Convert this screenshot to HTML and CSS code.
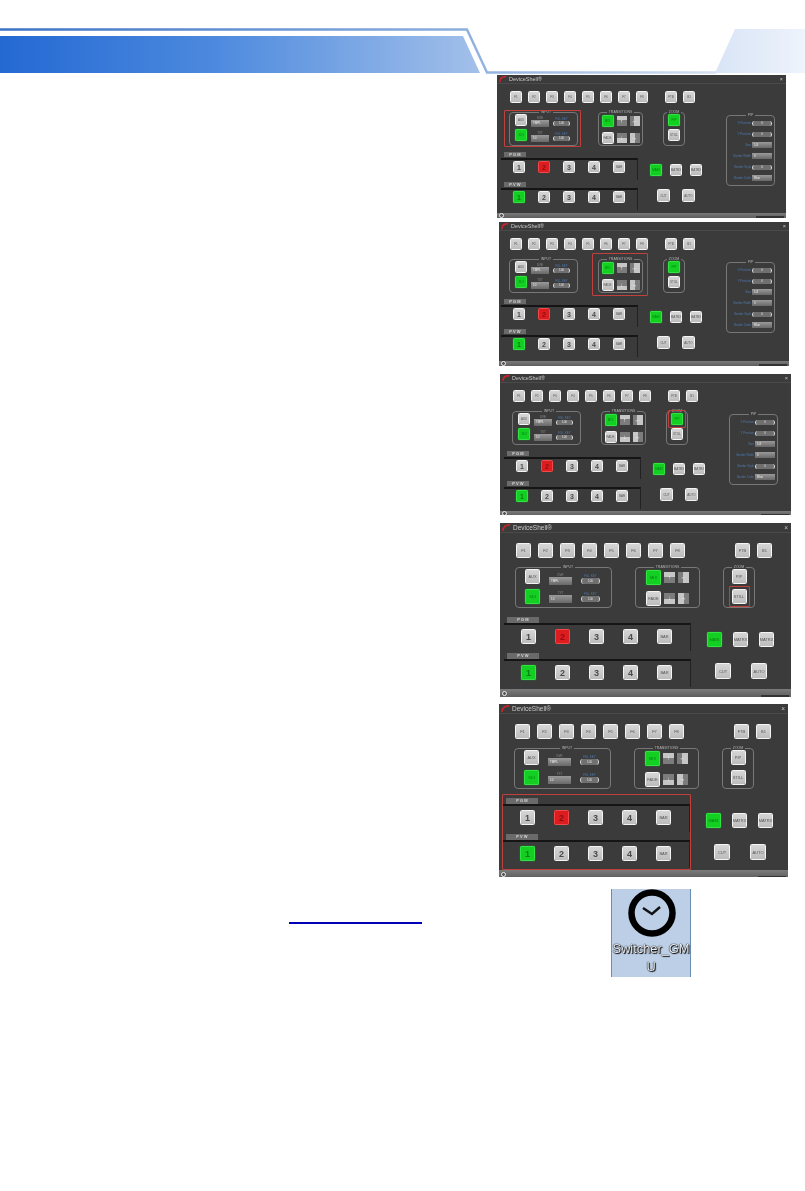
FILE: index.html
```html
<!DOCTYPE html>
<html>
  <head>
    <title>Switcher GMU</title>
    <meta charset="utf-8" />
    <link rel="stylesheet" href="styles.css">
  </head>
  <body>
    <svg class="banner" width="805" height="75" viewBox="0 0 805 75">
      <defs>
        <linearGradient id="band"><stop offset="0" stop-color="#2469d3"/><stop offset=".45" stop-color="#4d8ade"/><stop offset="1" stop-color="#a3c0ea"/></linearGradient>
        <linearGradient id="rule" gradientUnits="userSpaceOnUse" x1="0" x2="715" y1="0" y2="0"><stop offset="0" stop-color="#3a72c4"/><stop offset=".65" stop-color="#8dafdf"/><stop offset="1" stop-color="#d5e0f0"/></linearGradient>
        <linearGradient id="tab"><stop offset="0" stop-color="#d8e4f6"/><stop offset="1" stop-color="#eef3fc"/></linearGradient>
      </defs>
      <path d="M0 29.5H467L487 72.5H716" fill="none" stroke="url(#rule)" stroke-width="2.4"/>
      <path d="M0 36H463L480 73H0Z" fill="url(#band)"/>
      <path d="M735 29H805V73H715Z" fill="url(#tab)"/>
    </svg>

    <div class="shots">
      <!-- shot 1: input group marked -->
      <section class="panel shot-1">
        <header class="title"><svg class="logo" viewBox="0 0 10 8"><path d="M1 8C1 3 5 1 9 1" fill="none" stroke="#c8242a" stroke-width="2"/></svg><span>DeviceShell®</span><span class="close">×</span></header>
        <div class="work">
          <div class="main">
            <div class="fkeys"><b class="key">F1</b><b class="key">F2</b><b class="key">F3</b><b class="key">F4</b><b class="key">F5</b><b class="key">F6</b><b class="key">F7</b><b class="key">F8</b><b class="key f-right">FTB</b><b class="key">B1</b></div>
            <div class="groups">
              <fieldset class="group input-group marked"><legend>INPUT</legend>
                <div class="stack"><b class="key">AUX</b><b class="key on">SDI</b></div>
                <div class="stack combos"><label>DVE<i class="combo">TMPL</i></label><label>TXT<i class="combo">10</i></label></div>
                <div class="stack pills"><label class="blue">FILL KEY<i class="pill">100</i></label><label class="blue">FILL KEY<i class="pill">100</i></label></div>
              </fieldset>
              <fieldset class="group trans-group"><legend>TRANSITIONS</legend>
                <b class="key on">MIX</b><i class="wipe wipe-up">↑</i><i class="wipe wipe-left">←</i><b class="key">FADE</b><i class="wipe wipe-down">↓</i><i class="wipe wipe-right">→</i>
              </fieldset>
              <fieldset class="group zoom-group"><legend>ZOOM</legend>
                <div class="stack"><b class="key on">PIP</b><b class="key">STILL</b></div>
              </fieldset>
            </div>
            <div class="lower">
              <div class="rows">
                <div class="row-label">P G M</div>
                <div class="row"><b class="key num">1</b><b class="key num alert">2</b><b class="key num">3</b><b class="key num">4</b><b class="key">BAR</b></div>
                <div class="row-label">P V W</div>
                <div class="row"><b class="key num on">1</b><b class="key num">2</b><b class="key num">3</b><b class="key num">4</b><b class="key">BAR</b></div>
              </div>
              <div class="outs">
                <div class="outs-top"><b class="key on">MAIN</b><b class="key">MATRX</b><b class="key">MATRX</b></div>
                <div class="outs-bottom"><b class="key">CUT</b><b class="key">AUTO</b></div>
              </div>
            </div>
          </div>
          <fieldset class="group pip"><legend>PIP</legend>
            <label class="blue">X Position<i class="pill">0</i></label><label class="blue">Y Position<i class="pill">0</i></label><label class="blue">Size<i class="combo">1/4</i></label><label class="blue">Border Width<i class="combo">0</i></label><label class="blue">Border Style<i class="pill">0</i></label><label class="blue">Border Color<i class="combo">Blue</i></label>
          </fieldset>
        </div>
        <footer class="status"><i class="dot"></i><i class="grip"></i></footer>
      </section>

      <!-- shot 2: transitions marked -->
      <section class="panel shot-2">
        <header class="title"><svg class="logo" viewBox="0 0 10 8"><path d="M1 8C1 3 5 1 9 1" fill="none" stroke="#c8242a" stroke-width="2"/></svg><span>DeviceShell®</span><span class="close">×</span></header>
        <div class="work">
          <div class="main">
            <div class="fkeys"><b class="key">F1</b><b class="key">F2</b><b class="key">F3</b><b class="key">F4</b><b class="key">F5</b><b class="key">F6</b><b class="key">F7</b><b class="key">F8</b><b class="key f-right">FTB</b><b class="key">B1</b></div>
            <div class="groups">
              <fieldset class="group input-group"><legend>INPUT</legend>
                <div class="stack"><b class="key">AUX</b><b class="key on">SDI</b></div>
                <div class="stack combos"><label>DVE<i class="combo">TMPL</i></label><label>TXT<i class="combo">10</i></label></div>
                <div class="stack pills"><label class="blue">FILL KEY<i class="pill">100</i></label><label class="blue">FILL KEY<i class="pill">100</i></label></div>
              </fieldset>
              <div class="trans-frame marked">
                <fieldset class="group trans-group"><legend>TRANSITIONS</legend>
                  <b class="key on">MIX</b><i class="wipe wipe-up">↑</i><i class="wipe wipe-left">←</i><b class="key">FADE</b><i class="wipe wipe-down">↓</i><i class="wipe wipe-right">→</i>
                </fieldset>
              </div>
              <fieldset class="group zoom-group"><legend>ZOOM</legend>
                <div class="stack"><b class="key on">PIP</b><b class="key">STILL</b></div>
              </fieldset>
            </div>
            <div class="lower">
              <div class="rows">
                <div class="row-label">P G M</div>
                <div class="row"><b class="key num">1</b><b class="key num alert">2</b><b class="key num">3</b><b class="key num">4</b><b class="key">BAR</b></div>
                <div class="row-label">P V W</div>
                <div class="row"><b class="key num on">1</b><b class="key num">2</b><b class="key num">3</b><b class="key num">4</b><b class="key">BAR</b></div>
              </div>
              <div class="outs">
                <div class="outs-top"><b class="key on">MAIN</b><b class="key">MATRX</b><b class="key">MATRX</b></div>
                <div class="outs-bottom"><b class="key">CUT</b><b class="key">AUTO</b></div>
              </div>
            </div>
          </div>
          <fieldset class="group pip"><legend>PIP</legend>
            <label class="blue">X Position<i class="pill">0</i></label><label class="blue">Y Position<i class="pill">0</i></label><label class="blue">Size<i class="combo">1/4</i></label><label class="blue">Border Width<i class="combo">0</i></label><label class="blue">Border Style<i class="pill">0</i></label><label class="blue">Border Color<i class="combo">Blue</i></label>
          </fieldset>
        </div>
        <footer class="status"><i class="dot"></i><i class="grip"></i></footer>
      </section>

      <!-- shot 3: pip key marked -->
      <section class="panel shot-3">
        <header class="title"><svg class="logo" viewBox="0 0 10 8"><path d="M1 8C1 3 5 1 9 1" fill="none" stroke="#c8242a" stroke-width="2"/></svg><span>DeviceShell®</span><span class="close">×</span></header>
        <div class="work">
          <div class="main">
            <div class="fkeys"><b class="key">F1</b><b class="key">F2</b><b class="key">F3</b><b class="key">F4</b><b class="key">F5</b><b class="key">F6</b><b class="key">F7</b><b class="key">F8</b><b class="key f-right">FTB</b><b class="key">B1</b></div>
            <div class="groups">
              <fieldset class="group input-group"><legend>INPUT</legend>
                <div class="stack"><b class="key">AUX</b><b class="key on">SDI</b></div>
                <div class="stack combos"><label>DVE<i class="combo">TMPL</i></label><label>TXT<i class="combo">10</i></label></div>
                <div class="stack pills"><label class="blue">FILL KEY<i class="pill">100</i></label><label class="blue">FILL KEY<i class="pill">100</i></label></div>
              </fieldset>
              <fieldset class="group trans-group"><legend>TRANSITIONS</legend>
                <b class="key on">MIX</b><i class="wipe wipe-up">↑</i><i class="wipe wipe-left">←</i><b class="key">FADE</b><i class="wipe wipe-down">↓</i><i class="wipe wipe-right">→</i>
              </fieldset>
              <fieldset class="group zoom-group"><legend>ZOOM</legend>
                <div class="stack"><b class="key on marked">PIP</b><b class="key">STILL</b></div>
              </fieldset>
            </div>
            <div class="lower">
              <div class="rows">
                <div class="row-label">P G M</div>
                <div class="row"><b class="key num">1</b><b class="key num alert">2</b><b class="key num">3</b><b class="key num">4</b><b class="key">BAR</b></div>
                <div class="row-label">P V W</div>
                <div class="row"><b class="key num on">1</b><b class="key num">2</b><b class="key num">3</b><b class="key num">4</b><b class="key">BAR</b></div>
              </div>
              <div class="outs">
                <div class="outs-top"><b class="key on">MAIN</b><b class="key">MATRX</b><b class="key">MATRX</b></div>
                <div class="outs-bottom"><b class="key">CUT</b><b class="key">AUTO</b></div>
              </div>
            </div>
          </div>
          <fieldset class="group pip"><legend>PIP</legend>
            <label class="blue">X Position<i class="pill">0</i></label><label class="blue">Y Position<i class="pill">0</i></label><label class="blue">Size<i class="combo">1/4</i></label><label class="blue">Border Width<i class="combo">0</i></label><label class="blue">Border Style<i class="pill">0</i></label><label class="blue">Border Color<i class="combo">Blue</i></label>
          </fieldset>
        </div>
        <footer class="status"><i class="dot"></i><i class="grip"></i></footer>
      </section>

      <!-- shot 4: still key marked, larger window without pip -->
      <section class="panel wide shot-4">
        <header class="title"><svg class="logo" viewBox="0 0 10 8"><path d="M1 8C1 3 5 1 9 1" fill="none" stroke="#c8242a" stroke-width="2"/></svg><span>DeviceShell®</span><span class="close">×</span></header>
        <div class="work">
          <div class="main">
            <div class="fkeys"><b class="key">F1</b><b class="key">F2</b><b class="key">F3</b><b class="key">F4</b><b class="key">F5</b><b class="key">F6</b><b class="key">F7</b><b class="key">F8</b><b class="key f-right">FTB</b><b class="key">B1</b></div>
            <div class="groups">
              <fieldset class="group input-group"><legend>INPUT</legend>
                <div class="stack"><b class="key">AUX</b><b class="key on">SDI</b></div>
                <div class="stack combos"><label>DVE<i class="combo">TMPL</i></label><label>TXT<i class="combo">10</i></label></div>
                <div class="stack pills"><label class="blue">FILL KEY<i class="pill">100</i></label><label class="blue">FILL KEY<i class="pill">100</i></label></div>
              </fieldset>
              <fieldset class="group trans-group"><legend>TRANSITIONS</legend>
                <b class="key on">MIX</b><i class="wipe wipe-up">↑</i><i class="wipe wipe-left">←</i><b class="key">FADE</b><i class="wipe wipe-down">↓</i><i class="wipe wipe-right">→</i>
              </fieldset>
              <fieldset class="group zoom-group"><legend>ZOOM</legend>
                <div class="stack"><b class="key">PIP</b><b class="key marked">STILL</b></div>
              </fieldset>
            </div>
            <div class="lower">
              <div class="rows">
                <div class="row-label">P G M</div>
                <div class="row"><b class="key num">1</b><b class="key num alert">2</b><b class="key num">3</b><b class="key num">4</b><b class="key">BAR</b></div>
                <div class="row-label">P V W</div>
                <div class="row"><b class="key num on">1</b><b class="key num">2</b><b class="key num">3</b><b class="key num">4</b><b class="key">BAR</b></div>
              </div>
              <div class="outs">
                <div class="outs-top"><b class="key on">MAIN</b><b class="key">MATRX</b><b class="key">MATRX</b></div>
                <div class="outs-bottom"><b class="key">CUT</b><b class="key">AUTO</b></div>
              </div>
            </div>
          </div>
        </div>
        <footer class="status"><i class="dot"></i><i class="grip"></i></footer>
      </section>

      <!-- shot 5: pgm and pvw rows marked -->
      <section class="panel wide shot-5">
        <header class="title"><svg class="logo" viewBox="0 0 10 8"><path d="M1 8C1 3 5 1 9 1" fill="none" stroke="#c8242a" stroke-width="2"/></svg><span>DeviceShell®</span><span class="close">×</span></header>
        <div class="work">
          <div class="main">
            <div class="fkeys"><b class="key">F1</b><b class="key">F2</b><b class="key">F3</b><b class="key">F4</b><b class="key">F5</b><b class="key">F6</b><b class="key">F7</b><b class="key">F8</b><b class="key f-right">FTB</b><b class="key">B1</b></div>
            <div class="groups">
              <fieldset class="group input-group"><legend>INPUT</legend>
                <div class="stack"><b class="key">AUX</b><b class="key on">SDI</b></div>
                <div class="stack combos"><label>DVE<i class="combo">TMPL</i></label><label>TXT<i class="combo">10</i></label></div>
                <div class="stack pills"><label class="blue">FILL KEY<i class="pill">100</i></label><label class="blue">FILL KEY<i class="pill">100</i></label></div>
              </fieldset>
              <fieldset class="group trans-group"><legend>TRANSITIONS</legend>
                <b class="key on">MIX</b><i class="wipe wipe-up">↑</i><i class="wipe wipe-left">←</i><b class="key">FADE</b><i class="wipe wipe-down">↓</i><i class="wipe wipe-right">→</i>
              </fieldset>
              <fieldset class="group zoom-group"><legend>ZOOM</legend>
                <div class="stack"><b class="key">PIP</b><b class="key">STILL</b></div>
              </fieldset>
            </div>
            <div class="lower">
              <div class="rows marked">
                <div class="row-label">P G M</div>
                <div class="row"><b class="key num">1</b><b class="key num alert">2</b><b class="key num">3</b><b class="key num">4</b><b class="key">BAR</b></div>
                <div class="row-label">P V W</div>
                <div class="row"><b class="key num on">1</b><b class="key num">2</b><b class="key num">3</b><b class="key num">4</b><b class="key">BAR</b></div>
              </div>
              <div class="outs">
                <div class="outs-top"><b class="key on">MAIN</b><b class="key">MATRX</b><b class="key">MATRX</b></div>
                <div class="outs-bottom"><b class="key">CUT</b><b class="key">AUTO</b></div>
              </div>
            </div>
          </div>
        </div>
        <footer class="status"><i class="dot"></i><i class="grip"></i></footer>
      </section>
    </div>

    <div class="bottom">
      <div class="link-rule"></div>
      <div class="desktop-icon">
        <svg width="80" height="50" viewBox="0 0 80 50"><circle cx="41" cy="24" r="20.5" fill="none" stroke="#000" stroke-width="6.5"/><path d="M32 19L41 25L49 18" fill="none" stroke="#111" stroke-width="2.4"/></svg>
        <div class="desktop-name">Switcher_GMU</div>
      </div>
    </div>
  </body>
</html>
```

FILE: styles.css
```css
body {
  margin: 0;
  background: #fff;
  font-family: "Liberation Sans", Arial, sans-serif;
  min-height: 1191px;
}

.banner {
  display: block;
}

.shots {
  display: flex;
  flex-direction: column;
  align-items: flex-start;
}

.shot-1 { margin-left: 497px; width: 289px; height: 143px; }
.shot-2 { margin: 4px 0 0 499px; width: 290px; height: 144px; }
.shot-3 { margin: 8px 0 0 500px; width: 291px; height: 141px; }
.shot-4 { margin: 8px 0 0 500px; width: 291px; height: 174px; }
.shot-5 { margin: 7px 0 0 499px; width: 289px; height: 173px; }

.shot-2 .main { margin-left: -2px; }

/* sizes differ between the small and the large window */
.panel {
  --title: 8px;
  --title-font: 5.5px;
  --status: 5px;
  --btn: 12px;
  --btn-font: 3px;
  --num-font: 7px;
  --key-gap: 6px;
  --key-left: 13px;
  --key-top: 7px;
  --f-right: 11px;
  --groups-top: 7px;
  --groups-left: 12px;
  --group-h: 36px;
  --input-w: 69px;
  --trans-w: 45px;
  --zoom-w: 22px;
  --group-gap: 20px;
  --stack-gap: 3px;
  --stack-left: 5px;
  --combo-w: 18px;
  --combo-h: 7px;
  --pill-w: 17px;
  --pill-h: 5px;
  --col-gap: 4px;
  --wipe: 10px;
  --lower-top: 6px;
  --rows-w: 137px;
  --label-w: 22px;
  --label-h: 5px;
  --label-gap: 1px;
  --row-h: 22px;
  --row-pad: 1px;
  --row-left: 12px;
  --row-gap: 13px;
  --outs-left: 12px;
  --outs-top: 12px;
  --outs-gap: 8px;
  --outs-row: 13px;
  --cut: 13px;
  --cut-left: 7px;
  --cut-gap: 12px;
  display: flex;
  flex-direction: column;
  background: #3b3b3b;
  color: #cfcfcf;
  filter: blur(.4px);
  overflow: hidden;
}

.wide {
  --title: 9px;
  --title-font: 6.5px;
  --status: 8px;
  --btn: 15px;
  --btn-font: 4px;
  --num-font: 9px;
  --key-gap: 7px;
  --key-left: 16px;
  --key-top: 10px;
  --f-right: 43px;
  --groups-left: 15px;
  --group-h: 43px;
  --input-w: 97px;
  --trans-w: 65px;
  --zoom-w: 32px;
  --group-gap: 23px;
  --stack-gap: 5px;
  --stack-left: 9px;
  --combo-w: 23px;
  --combo-h: 8px;
  --pill-w: 19px;
  --pill-h: 6px;
  --col-gap: 9px;
  --wipe: 11px;
  --lower-top: 9px;
  --rows-w: 187px;
  --label-w: 32px;
  --label-h: 6px;
  --label-gap: 0px;
  --row-h: 28px;
  --row-pad: 4px;
  --row-left: 17px;
  --row-gap: 19px;
  --outs-left: 16px;
  --outs-top: 15px;
  --outs-gap: 11px;
  --outs-row: 16px;
  --cut: 16px;
  --cut-left: 8px;
  --cut-gap: 20px;
}

.title {
  display: flex;
  align-items: center;
  gap: 2px;
  height: var(--title);
  flex: none;
  padding: 0 3px 0 2px;
  border-bottom: 1px solid #4a4a4a;
  font-size: var(--title-font);
  color: #c9c9c9;
}

.logo {
  width: var(--title);
  height: var(--title);
}

.close {
  margin-left: auto;
}

.work {
  display: flex;
  flex: 1;
}

.main {
  flex: none;
  width: 229px;
}

.wide .main {
  width: 100%;
}

.fkeys {
  display: flex;
  gap: var(--key-gap);
  margin: var(--key-top) 0 0 var(--key-left);
}

.f-right {
  margin-left: var(--f-right);
}

.key {
  display: flex;
  align-items: center;
  justify-content: center;
  flex: none;
  box-sizing: border-box;
  width: var(--btn);
  height: var(--btn);
  border: 1px solid #f4f4f4;
  border-radius: 1.5px;
  background: linear-gradient(#d6d6d6, #bcbcbc);
  color: #555;
  font-size: var(--btn-font);
  font-weight: normal;
}

.num {
  font-size: var(--num-font);
  font-weight: bold;
  color: #4a4a4a;
}

.on {
  background: #12cf22;
  border-color: #35e245;
  color: #0a7d14;
  box-shadow: 0 0 1px #1be02c;
}

.alert {
  background: #dc1c1e;
  border-color: #ef4a4a;
  color: #8d1012;
}

.groups {
  display: flex;
  gap: var(--group-gap);
  margin: var(--groups-top) 0 0 var(--groups-left);
}

.group {
  box-sizing: border-box;
  margin: 0;
  padding: 0;
  min-width: 0;
  height: var(--group-h);
  border: 1px solid #777;
  border-radius: 4px;
}

.group legend {
  margin: 0 auto;
  padding: 0 2px;
  font-size: 3.5px;
  line-height: 4px;
  color: #b4b4b4;
  white-space: nowrap;
}

.input-group {
  display: flex;
  width: var(--input-w);
  gap: var(--col-gap);
  padding-left: var(--stack-left);
}

.stack {
  display: flex;
  flex-direction: column;
  gap: var(--stack-gap);
}

.combos, .pills {
  gap: 2px;
}

.stack label {
  display: flex;
  flex-direction: column;
  justify-content: flex-end;
  align-items: center;
  height: calc(var(--btn) + 1px);
  font-size: 3px;
  color: #8b8b8b;
}

.stack .blue {
  color: #4f78ad;
}

.combo {
  display: block;
  box-sizing: border-box;
  flex: none;
  width: var(--combo-w);
  height: var(--combo-h);
  padding-left: 2px;
  background: linear-gradient(#9a9a9a, #686868);
  color: #ececec;
  font-size: 3px;
  font-style: normal;
  line-height: var(--combo-h);
}

.pill {
  display: block;
  box-sizing: border-box;
  flex: none;
  width: var(--pill-w);
  height: var(--pill-h);
  margin-bottom: 1px;
  border: solid #d5d5d5;
  border-width: 0 1px;
  border-radius: 3px;
  background: #707070;
  color: #e2e2e2;
  font-size: 3px;
  font-style: normal;
  line-height: var(--pill-h);
  text-align: center;
}

.trans-group {
  display: grid;
  grid-template-columns: var(--btn) var(--wipe) var(--wipe);
  justify-content: center;
  align-items: center;
  justify-items: center;
  width: var(--trans-w);
  column-gap: 3px;
  row-gap: var(--stack-gap);
}

.wipe {
  display: block;
  width: var(--wipe);
  height: var(--wipe);
  color: #f2f2f2;
  font-size: 6px;
  font-style: normal;
  line-height: var(--wipe);
  text-align: center;
}

.wipe-up { background: linear-gradient(#c6c6c6 45%, #7c7c7c 45%); }
.wipe-down { background: linear-gradient(#7c7c7c 55%, #c6c6c6 55%); }
.wipe-left { background: linear-gradient(90deg, #7c7c7c 45%, #c6c6c6 45%); }
.wipe-right { background: linear-gradient(90deg, #c6c6c6 55%, #7c7c7c 55%); }

.zoom-group {
  width: var(--zoom-w);
}

.zoom-group .stack {
  align-items: center;
}

/* red frame drawn over the part the manual talks about */
.marked {
  position: relative;
}

.marked::after {
  content: "";
  position: absolute;
  inset: -4px;
  border: 1px solid #c0403e;
  border-radius: 1px;
  pointer-events: none;
}

.input-group.marked::after {
  inset: -4px -4px -2px -6px;
}

.trans-frame.marked::after {
  inset: -4px -5px -3px -6px;
}

.rows.marked::after {
  inset: -4px -1px 0 -1px;
}

.lower {
  display: flex;
  margin: var(--lower-top) 0 0 4px;
}

.rows {
  flex: none;
  width: var(--rows-w);
}

.row-label {
  width: var(--label-w);
  height: var(--label-h);
  margin: 0 0 var(--label-gap) 3px;
  background: #6a6a6a;
  color: #d8d8d8;
  font-size: 4px;
  font-weight: bold;
  line-height: var(--label-h);
  text-align: center;
}

.row {
  display: flex;
  box-sizing: border-box;
  gap: var(--row-gap);
  height: var(--row-h);
  margin-bottom: 2px;
  padding: var(--row-pad) 0 0 var(--row-left);
  border-top: 2px solid #151515;
  border-right: 1px solid #222;
}

.outs {
  margin: var(--outs-top) 0 0 var(--outs-left);
}

.outs-top {
  display: flex;
  gap: var(--outs-gap);
}

.outs-bottom {
  display: flex;
  gap: var(--cut-gap);
  margin: var(--outs-row) 0 0 var(--cut-left);
}

.outs-bottom .key {
  width: var(--cut);
  height: var(--cut);
}

.pip {
  flex: none;
  display: flex;
  flex-direction: column;
  gap: 5px;
  width: 49px;
  height: 73px;
  margin-top: 29px;
  padding: 3px 2px 0 2px;
}

.pip label {
  display: flex;
  align-items: center;
  justify-content: flex-end;
  gap: 1px;
  height: 6px;
  font-size: 3px;
  color: #4f78ad;
  white-space: nowrap;
}

.pip .combo, .pip .pill {
  flex: none;
  width: 20px;
  margin: 0;
}

.pip .combo {
  height: 6px;
  line-height: 6px;
}

.status {
  display: flex;
  align-items: center;
  flex: none;
  height: var(--status);
  margin-top: auto;
  background: linear-gradient(#7b7b7b, #5e5e5e);
}

.dot {
  width: 3px;
  height: 3px;
  margin-left: 2px;
  border: 1px solid #eee;
  border-radius: 50%;
  background: #555;
}

.grip {
  width: 28px;
  height: 2px;
  margin: auto 2px 0 auto;
  background: #333;
}

.bottom {
  display: flex;
  margin: 12px 0 0 289px;
}

.link-rule {
  width: 133px;
  height: 1.5px;
  margin-top: 33px;
  background: #0000b4;
}

.desktop-icon {
  box-sizing: border-box;
  width: 80px;
  height: 88px;
  margin-left: 189px;
  border: solid #6a8eb3;
  border-width: 0 1px;
  background: #bccfe6;
  filter: blur(.3px);
}

.desktop-icon svg {
  display: block;
  margin-left: -1px;
}

.desktop-name {
  margin-top: 1px;
  color: #eef1f5;
  font-size: 12.8px;
  line-height: 18px;
  text-align: center;
  text-shadow: 0 0 1px #000, 0 0 1px #000, 1px 1px 1px #000;
  word-break: break-all;
}
```
